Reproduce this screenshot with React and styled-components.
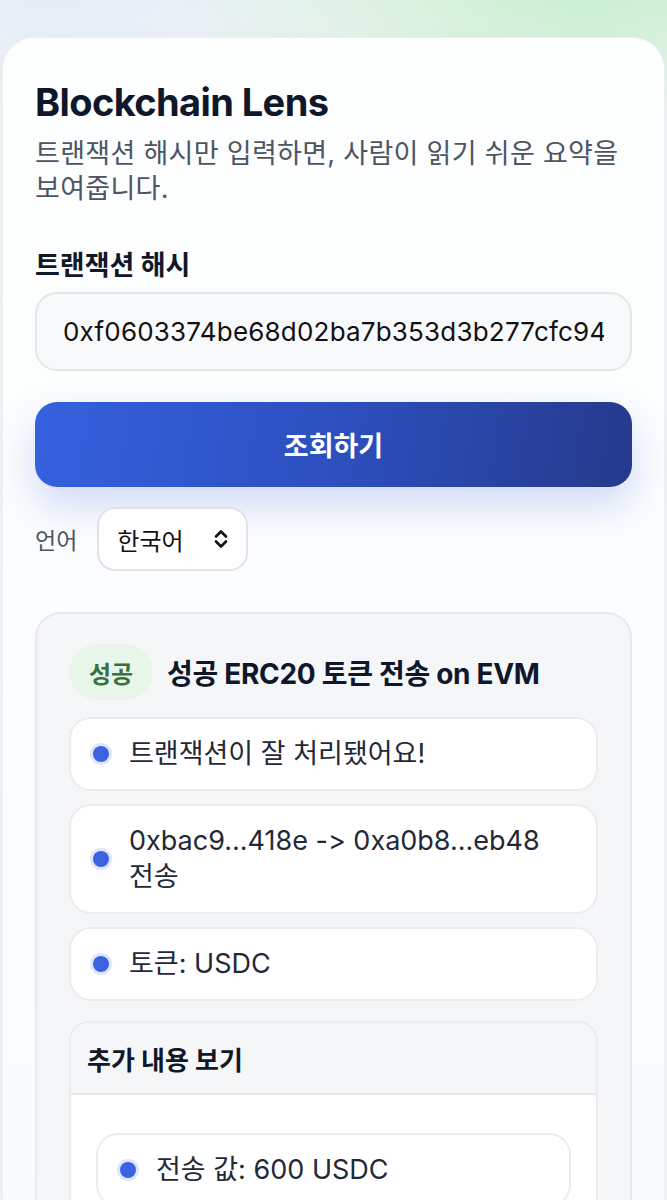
import React from 'react';
import styled, { createGlobalStyle } from 'styled-components';

const GlobalStyle = createGlobalStyle`
  html, body {
    margin: 0;
    padding: 0;
  }
  body {
    font-family: Inter, "Noto Sans CJK KR", sans-serif;
    font-feature-settings: "calt" 0;
    font-variant-ligatures: none;
    word-break: keep-all;
    color: #111827;
    background:
      radial-gradient(ellipse 420px 120px at 88% 0%, #c9efcf 0%, rgba(201, 239, 207, 0) 100%),
      radial-gradient(ellipse 360px 110px at 8% 0%, #e4ecf5 0%, rgba(228, 236, 245, 0) 100%),
      #f3f5f8;
    min-height: 1200px;
  }
  * {
    box-sizing: border-box;
  }
`

const Page = styled.div`
  padding: 37px 2px 0;
`

const Card = styled.main`
  background: linear-gradient(180deg, #fdfefe 0%, #f9fafc 100%);
  border-radius: 32px;
  border: 1px solid #eceff3;
  box-shadow: 0 10px 30px rgba(15, 23, 42, 0.05);
  padding: 41px 32px 60px;
  min-height: 1200px;
`

const Title = styled.h1`
  margin: 0;
  font-size: 38px;
  line-height: 46px;
  font-weight: 700;
  letter-spacing: -0.6px;
  color: #0f172a;
`

const Subtitle = styled.p`
  margin: 11px 0 0;
  font-size: 27px;
  line-height: 35px;
  letter-spacing: 0.3px;
  color: #4b5563;
`

const Label = styled.label`
  display: block;
  margin: 44px 0 10px;
  font-size: 27px;
  line-height: 32px;
  font-weight: 700;
  color: #111827;
`

const HashInput = styled.input`
  display: block;
  width: 100%;
  height: 79px;
  padding: 0 26px;
  border: 2px solid #e3e6eb;
  border-radius: 22px;
  background: #f8f9fb;
  font-family: Inter, "Noto Sans CJK KR", sans-serif;
  font-size: 26px;
  letter-spacing: 0.2px;
  color: #111;
  outline: none;
`

const SubmitButton = styled.button`
  display: block;
  width: 100%;
  height: 85px;
  margin-top: 31px;
  border: none;
  border-radius: 22px;
  background: linear-gradient(100deg, #3561df 0%, #2d4fbf 50%, #253a8b 100%);
  box-shadow: 0 18px 40px rgba(53, 97, 224, 0.22);
  color: #fff;
  font-family: Inter, "Noto Sans CJK KR", sans-serif;
  font-size: 27px;
  font-weight: 700;
`

const LangRow = styled.div`
  display: flex;
  align-items: center;
  gap: 20px;
  margin-top: 20px;
`

const LangLabel = styled.span`
  font-size: 23px;
  color: #4b5563;
`

const Select = styled.div`
  display: flex;
  align-items: center;
  justify-content: space-between;
  width: 151px;
  height: 64px;
  padding: 0 16px 0 18px;
  border: 2px solid #dfe3e9;
  border-radius: 18px;
  background: #fff;
  font-size: 24px;
  color: #111;
`

const Result = styled.section`
  margin-top: 41px;
  padding: 30px 32px 40px;
  border: 2px solid #e7e9ee;
  border-radius: 26px;
  background: #f5f6f8;
`

const ResultHead = styled.div`
  display: flex;
  align-items: center;
  gap: 14px;
  margin-bottom: 17px;
`

const Badge = styled.span`
  display: inline-flex;
  align-items: center;
  justify-content: center;
  width: 84px;
  height: 56px;
  border-radius: 28px;
  background: #e8f6ea;
  color: #39703f;
  font-size: 24px;
  font-weight: 600;
`

const ResultTitle = styled.h2`
  margin: 0;
  font-size: 28px;
  font-weight: 700;
  letter-spacing: -0.3px;
  color: #0f172a;
`

const List = styled.ul`
  list-style: none;
  margin: 0;
  padding: 0;
  display: flex;
  flex-direction: column;
  gap: 13px;
`

const Item = styled.li`
  display: flex;
  align-items: center;
  gap: 20px;
  padding: 17px 20px 17px 22px;
  border: 2px solid #eaecf0;
  border-radius: 22px;
  background: #fff;
  font-size: 27px;
  line-height: 36px;
  color: #1f2937;
`

const Dot = styled.span`
  flex: none;
  width: 16px;
  height: 16px;
  border-radius: 50%;
  background: #3b63e0;
  box-shadow: 0 0 0 3px #dfe6fb;
`

const Details = styled.details`
  margin-top: 20px;
  border: 2px solid #eaecf0;
  border-radius: 20px;
  background: #fff;
  overflow: hidden;
`

const Summary = styled.summary`
  list-style: none;
  display: flex;
  align-items: center;
  height: 72px;
  padding: 0 16px;
  background: #f5f6f8;
  border-bottom: 2px solid #e6e8ec;
  font-size: 26px;
  font-weight: 700;
  color: #111827;
  &::-webkit-details-marker {
    display: none;
  }
`

const DetailsBody = styled.div`
  padding: 38px 25px 20px;
`

function ChevronUpDown() {
  return (
    <svg width="18" height="22" viewBox="0 0 18 22" fill="none">
      <path d="M4 8.5 L9 3.5 L14 8.5" stroke="#111" strokeWidth="2.6" strokeLinecap="round" strokeLinejoin="round" />
      <path d="M4 13.5 L9 18.5 L14 13.5" stroke="#111" strokeWidth="2.6" strokeLinecap="round" strokeLinejoin="round" />
    </svg>
  )
}

const summary = [
  '트랜잭션이 잘 처리됐어요!',
  '0xbac9...418e -> 0xa0b8...eb48 전송',
  '토큰: USDC',
]

export default function App() {
  return (
    <>
      <GlobalStyle />
      <Page>
        <Card>
          <Title>Blockchain Lens</Title>
          <Subtitle>트랜잭션 해시만 입력하면, 사람이 읽기 쉬운 요약을 보여줍니다.</Subtitle>

          <Label htmlFor="hash">트랜잭션 해시</Label>
          <HashInput id="hash" defaultValue="0xf0603374be68d02ba7b353d3b277cfc94" />
          <SubmitButton>조회하기</SubmitButton>

          <LangRow>
            <LangLabel>언어</LangLabel>
            <Select>
              한국어
              <ChevronUpDown />
            </Select>
          </LangRow>

          <Result>
            <ResultHead>
              <Badge>성공</Badge>
              <ResultTitle>성공 ERC20 토큰 전송 on EVM</ResultTitle>
            </ResultHead>
            <List>
              {summary.map(line => (
                <Item key={line}>
                  <Dot />
                  <span>{line}</span>
                </Item>
              ))}
            </List>
            <Details open>
              <Summary>추가 내용 보기</Summary>
              <DetailsBody>
                <List>
                  <Item>
                    <Dot />
                    <span>전송 값: 600 USDC</span>
                  </Item>
                </List>
              </DetailsBody>
            </Details>
          </Result>
        </Card>
      </Page>
    </>
  )
}
